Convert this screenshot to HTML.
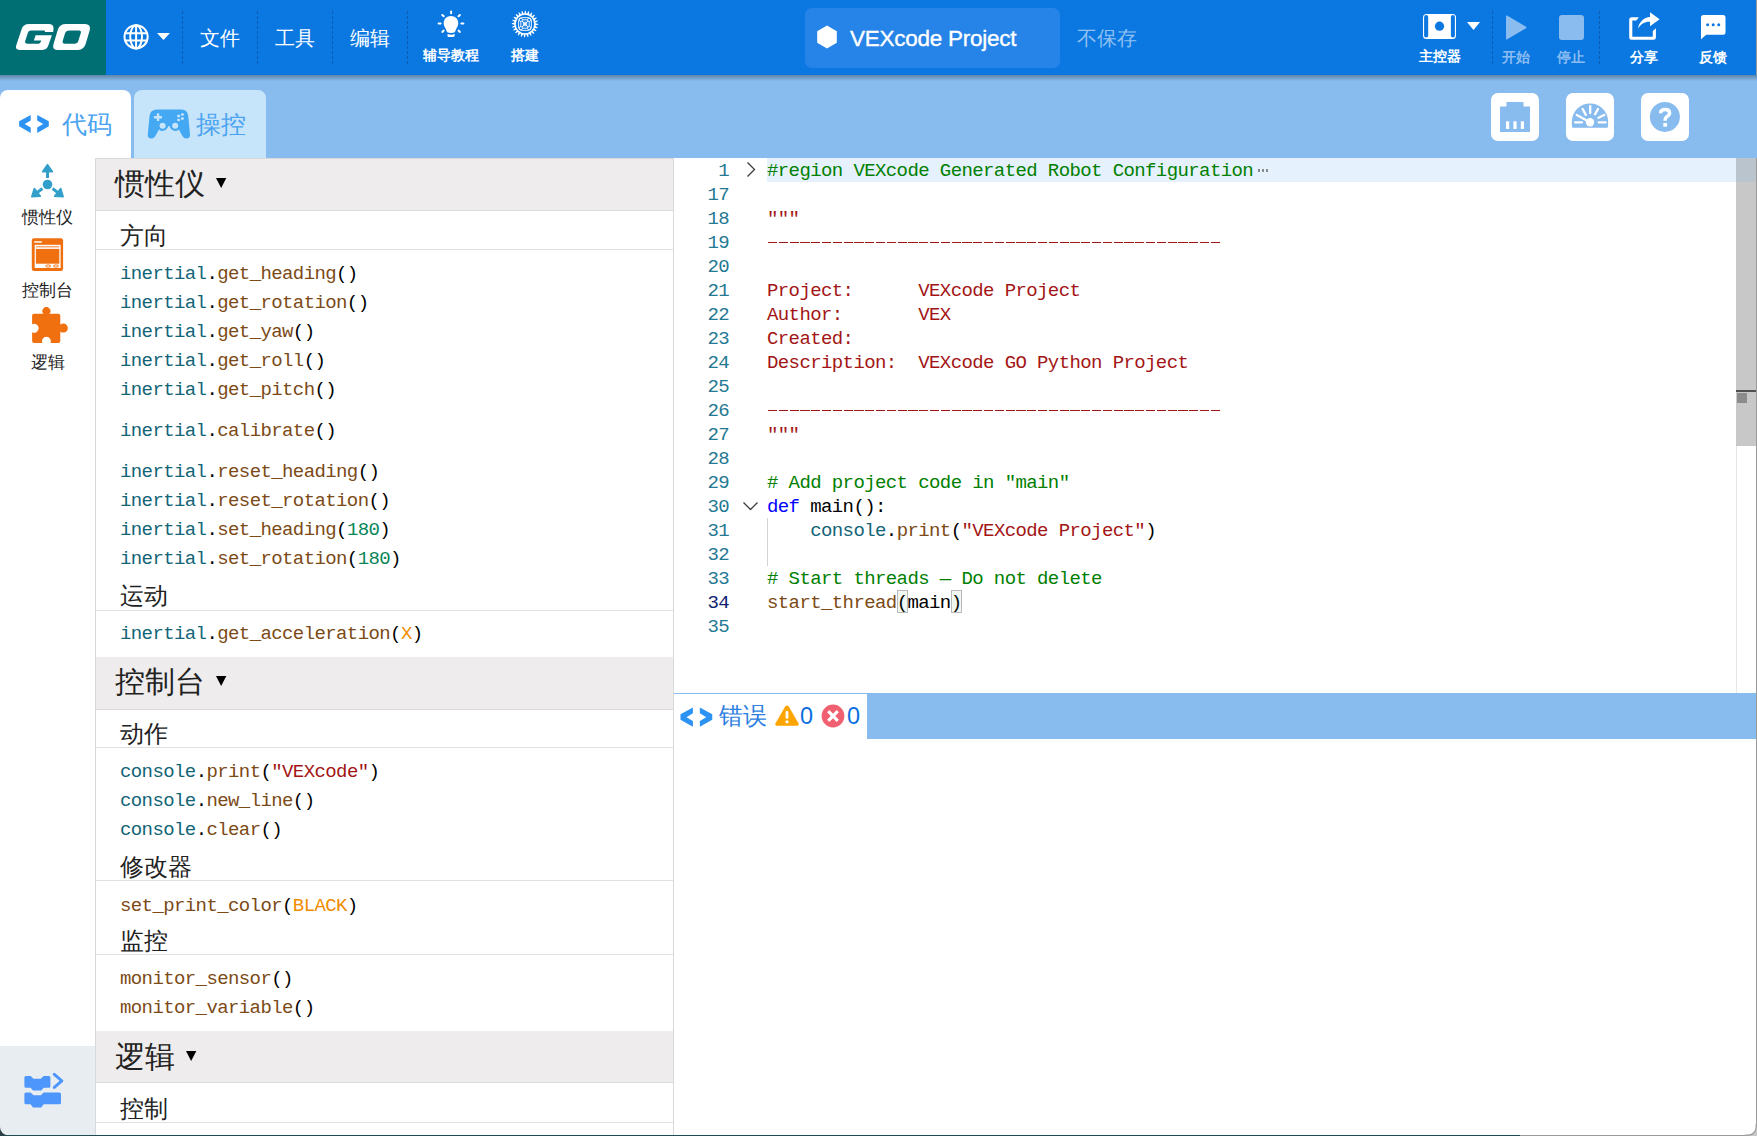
<!DOCTYPE html>
<html><head><meta charset="utf-8">
<style>
*{box-sizing:border-box;margin:0;padding:0}
html,body{width:1757px;height:1136px;overflow:hidden;background:#fff;font-family:"Liberation Sans",sans-serif}
.a{position:absolute;white-space:pre}
#top{position:absolute;left:0;top:0;width:1757px;height:75px;background:#0b78e2}
#logo{position:absolute;left:0;top:0;width:106px;height:75px;background:#006f73}
#sub{position:absolute;left:0;top:75px;width:1757px;height:83px;background:#88bbee}
#shadow{position:absolute;left:0;top:75px;width:1757px;height:6px;background:linear-gradient(#5f86a8,rgba(136,187,238,0))}
.sep{position:absolute;top:11px;height:53px;width:0;border-left:1px dashed #0b5bb0}
.menu{position:absolute;top:25px;color:#fff;font-size:20px;line-height:26px}
.blab{position:absolute;color:#fff;font-size:13.5px;font-weight:bold;line-height:16px;text-align:center}
.tab{position:absolute;top:90px;height:68px;border-radius:8px 8px 0 0}
.box{position:absolute;top:93px;width:48px;height:48px;background:#fff;border-radius:7px}
#side{position:absolute;left:0;top:158px;width:95px;height:978px;background:#fff}
#panel{position:absolute;left:95px;top:158px;width:579px;height:978px;background:#fff;border-left:1px solid #d9d9d9;border-right:1px solid #d9d9d9;overflow:hidden}
.hdr{position:absolute;left:0;width:577px;height:52px;background:#eeecec;border-top:1px solid #dcdcdc;border-bottom:1px solid #dcdcdc}
.hl{position:absolute;left:0;width:577px;height:1px;background:#e0e0e0}
.htxt{position:absolute;font-size:30px;margin-left:1.5px;color:#222;line-height:34px}
.stxt{position:absolute;font-size:24px;color:#222;line-height:28px;margin-left:1px;margin-top:1.5px}
.code{position:absolute;font-family:"Liberation Mono",monospace;font-size:19px;letter-spacing:-0.6px;line-height:22px;white-space:pre;color:#000}
.tc{color:#126477}.fn{color:#7c4a16}.nm{color:#098658}.or{color:#f08c00}.st{color:#a31515}.cm{color:#008000}.kw{color:#0000ff}
#editor{position:absolute;left:674px;top:158px;width:1082px;height:535px;background:#fff;overflow:hidden}
.ln{position:absolute;left:0;margin-top:1px;width:55px;text-align:right;font-family:"Liberation Mono",monospace;font-size:19px;letter-spacing:-0.6px;line-height:24px;color:#237893}
.el{position:absolute;left:93px;margin-top:1px;font-family:"Liberation Mono",monospace;font-size:19px;letter-spacing:-0.6px;line-height:24px;white-space:pre;color:#000}
</style></head><body>
<!-- top bar -->
<div id="top"></div>
<div id="logo"><svg width="106" height="75" viewBox="0 0 106 75"><path fill="#fff" d="M29,24 L48.5,24 Q54,24 53.5,29 L53.2,32.1 L45.1,32.1 L44.5,30.5 L31,30.5 Q28.5,30.5 28,32.5 L25.2,41 Q24.5,43.8 27.5,43.8 L37.4,43.8 Q40.5,43.8 41.2,40.4 L33.9,40.4 L35.6,35.3 L51.9,35.3 L48.5,45 Q47,49.9 42.4,49.9 L19.5,49.9 Q15,49.9 16.2,45.5 L21.5,29.5 Q23,24 29,24 Z"/><path fill="#fff" fill-rule="evenodd" d="M66,24 H85 Q91,24 89.8,30 L85.8,43.5 Q84,50 78,50 H58 Q52,50 53.4,44.5 L57.8,29.8 Q59.5,24 66,24 Z M69.5,30.5 H79 Q81.5,30.5 80.8,33 L78.3,41 Q77.5,43.8 74.5,43.8 H65 Q62,43.8 62.7,41 L65,33.5 Q65.8,30.5 69.5,30.5 Z"/></svg></div>

<!-- globe -->
<svg class="a" style="left:122px;top:23px" width="28" height="28" viewBox="0 0 28 28"><g fill="none" stroke="#fff" stroke-width="2"><circle cx="14.1" cy="13.8" r="11.6"/><ellipse cx="14.1" cy="13.8" rx="5.9" ry="11.6"/><line x1="14.1" y1="2" x2="14.1" y2="25.6"/><path d="M2.6,10.2 H25.6 M2.6,17.5 H25.6"/></g></svg>
<svg class="a" style="left:157px;top:33px" width="13" height="7" viewBox="0 0 13 7"><path d="M0,0 H13 L6.5,7 Z" fill="#fff"/></svg>
<div class="sep" style="left:182px"></div>
<div class="menu" style="left:200px">文件</div>
<div class="sep" style="left:257px"></div>
<div class="menu" style="left:275px">工具</div>
<div class="sep" style="left:332px"></div>
<div class="menu" style="left:350px">编辑</div>
<div class="sep" style="left:407px"></div>
<!-- bulb -->
<svg class="a" style="left:436px;top:9px" width="30" height="30" viewBox="0 0 30 30"><g fill="#fff"><path d="M15,7.1 C19.2,7.1 22.3,10.2 22.3,14.3 C22.3,17.5 20.2,19.3 19.6,21.5 Q19.3,24 15,24 Q10.7,24 10.4,21.5 C9.8,19.3 7.7,17.5 7.7,14.3 C7.7,10.2 10.8,7.1 15,7.1 Z"/><path d="M11.6,24.9 Q15,26.4 18.9,24.9 L18.5,27 Q18.2,27.9 17.3,27.9 H12.7 Q11.8,27.9 11.5,27 Z"/></g><g stroke="#fff" stroke-width="2" stroke-linecap="round"><line x1="15.1" y1="2.6" x2="15.1" y2="4.3"/><line x1="6.3" y1="6" x2="7.7" y2="7.3"/><line x1="23.9" y1="6" x2="22.5" y2="7.3"/><line x1="2.6" y1="14.5" x2="4.6" y2="14.5"/><line x1="25.4" y1="14.5" x2="27.4" y2="14.5"/><line x1="6.3" y1="22.9" x2="7.7" y2="21.6"/><line x1="23.9" y1="22.9" x2="22.5" y2="21.6"/></g></svg>
<div class="blab" style="left:420px;top:47.5px;width:62px">辅导教程</div>
<!-- gear -->
<svg class="a" style="left:511px;top:10px" width="28" height="28" viewBox="0 0 28 28"><path d="M13.36,3.42 L14.00,0.80 L14.79,0.82 L15.38,3.49 L16.12,3.62 L17.42,1.25 L18.17,1.48 L18.06,4.21 L18.74,4.52 L20.60,2.57 L21.27,2.98 L20.45,5.59 L21.03,6.07 L23.33,4.67 L23.88,5.24 L22.41,7.55 L22.85,8.16 L25.43,7.40 L25.81,8.10 L23.79,9.94 L24.06,10.65 L26.75,10.58 L26.93,11.35 L24.51,12.62 L24.58,13.36 L27.20,14.00 L27.18,14.79 L24.51,15.38 L24.38,16.12 L26.75,17.42 L26.52,18.17 L23.79,18.06 L23.48,18.74 L25.43,20.60 L25.02,21.27 L22.41,20.45 L21.93,21.03 L23.33,23.33 L22.76,23.88 L20.45,22.41 L19.84,22.85 L20.60,25.43 L19.90,25.81 L18.06,23.79 L17.35,24.06 L17.42,26.75 L16.65,26.93 L15.38,24.51 L14.64,24.58 L14.00,27.20 L13.21,27.18 L12.62,24.51 L11.88,24.38 L10.58,26.75 L9.83,26.52 L9.94,23.79 L9.26,23.48 L7.40,25.43 L6.73,25.02 L7.55,22.41 L6.97,21.93 L4.67,23.33 L4.12,22.76 L5.59,20.45 L5.15,19.84 L2.57,20.60 L2.19,19.90 L4.21,18.06 L3.94,17.35 L1.25,17.42 L1.07,16.65 L3.49,15.38 L3.42,14.64 L0.80,14.00 L0.82,13.21 L3.49,12.62 L3.62,11.88 L1.25,10.58 L1.48,9.83 L4.21,9.94 L4.52,9.26 L2.57,7.40 L2.98,6.73 L5.59,7.55 L6.07,6.97 L4.67,4.67 L5.24,4.12 L7.55,5.59 L8.16,5.15 L7.40,2.57 L8.10,2.19 L9.94,4.21 L10.65,3.94 L10.58,1.25 L11.35,1.07 L12.62,3.49 Z" fill="#fff"/><circle cx="14" cy="14" r="9.2" fill="#0b78e2"/><g fill="none" stroke="#fff" stroke-width="0.9"><rect x="7.6" y="7.6" width="12.8" height="12.8" rx="3.5"/><circle cx="9.8" cy="9.8" r="1.7"/><circle cx="18.2" cy="9.8" r="1.7"/><circle cx="9.8" cy="18.2" r="1.7"/><circle cx="18.2" cy="18.2" r="1.7"/><path d="M11.5,9.8 H16.5 M11.5,18.2 H16.5 M9.8,11.5 V16.5 M18.2,11.5 V16.5"/><rect x="12.3" y="12.3" width="3.4" height="3.4"/><path d="M11,11 L17,17 M17,11 L11,17"/></g></svg>
<div class="blab" style="left:505px;top:47.5px;width:40px">搭建</div>
<!-- project pill -->
<div class="a" style="left:805px;top:8px;width:255px;height:60px;background:#2683e8;border-radius:7px"></div>
<svg class="a" style="left:816.4px;top:25.4px" width="22" height="24" viewBox="0 0 22 24"><path d="M11,0.5 L20.8,6.2 V17.8 L11,23.5 L1.2,17.8 V6.2 Z" fill="#fff"/></svg>
<div class="a" style="left:850px;top:24.8px;color:#fff;font-size:22.5px;letter-spacing:-0.25px;-webkit-text-stroke:0.35px #fff;line-height:28px">VEXcode Project</div>
<div class="a" style="left:1077px;top:25px;color:#8fc0f1;font-size:20px;line-height:26px">不保存</div>
<!-- brain -->
<svg class="a" style="left:1422px;top:13px" width="35" height="27" viewBox="0 0 35 27"><rect x="1" y="1" width="33" height="25" rx="3.5" fill="#fff"/><rect x="2.1" y="2.0" width="4.1" height="22.4" rx="2" fill="#0b78e2"/><rect x="28.9" y="2.0" width="4.0" height="22.4" rx="2" fill="#0b78e2"/><circle cx="17.5" cy="13.2" r="4.6" fill="#0b78e2"/></svg>
<svg class="a" style="left:1467px;top:22px" width="13" height="8" viewBox="0 0 13 8"><path d="M0,0 H13 L6.5,8 Z" fill="#fff"/></svg>
<div class="blab" style="left:1410px;top:49px;width:60px">主控器</div>
<div class="sep" style="left:1492px"></div>
<svg class="a" style="left:1505px;top:14px" width="23" height="27" viewBox="0 0 23 27"><path d="M2,1.5 Q1,1 1,2.5 V24.5 Q1,26 2.2,25.3 L21,14.3 Q22,13.5 21,12.7 Z" fill="#8bbcf0"/></svg>
<div class="blab" style="left:1496px;top:50px;width:40px;color:#8bbcf0">开始</div>
<div class="a" style="left:1559px;top:15px;width:25px;height:25px;background:#8bbcf0;border-radius:3px"></div>
<div class="blab" style="left:1551px;top:50px;width:40px;color:#8bbcf0">停止</div>
<div class="sep" style="left:1599px"></div>
<!-- share -->
<svg class="a" style="left:1627px;top:10px" width="36" height="32" viewBox="0 0 36 32"><path d="M2.2,9.8 Q2.2,7.3 4.7,7.3 H11.8 L9.3,10.4 H5.3 V26.7 H25.8 V21 L28.9,18.2 V27.3 Q28.9,29.8 26.4,29.8 H4.7 Q2.2,29.8 2.2,27.3 Z" fill="#fff"/><path d="M11,18.8 C12,12 17,7.2 23,7 V2.2 L32.6,9.3 L23,16.2 V11.7 C18,11.5 13.5,14 11,18.8 Z" fill="#fff"/></svg>
<div class="blab" style="left:1624px;top:50px;width:40px">分享</div>
<!-- chat -->
<svg class="a" style="left:1700px;top:14px" width="27" height="26" viewBox="0 0 27 26"><path d="M3.5,0.9 H23 Q25.5,0.9 25.5,3.4 V18.2 Q25.5,20.7 23,20.7 H6.2 L1,25.2 V3.4 Q1,0.9 3.5,0.9 Z" fill="#fff"/><g fill="#0b78e2"><circle cx="7.6" cy="10.7" r="1.5"/><circle cx="13.2" cy="10.7" r="1.5"/><circle cx="18.7" cy="10.7" r="1.5"/></g></svg>
<div class="blab" style="left:1693px;top:50px;width:40px">反馈</div>
<div class="a" style="left:1756px;top:0;width:1px;height:1136px;background:#9a9a9a"></div>
<div id="sub"></div>
<div id="shadow"></div>
<div class="tab" style="left:0;width:131px;background:#fff"></div>
<div class="tab" style="left:134px;width:132px;background:#c6e4fa"></div>
<svg class="a" style="left:18px;top:113px" width="32" height="21" viewBox="0 0 32 21"><path fill="#2d93f3" d="M12.7,2 L1.1,8.3 V13.3 L12.7,19.9 V14.6 L6.7,11.1 L12.7,7.4 Z M19.2,2 L30.8,8.3 V13.3 L19.2,19.9 V14.6 L25.2,11.1 L19.2,7.4 Z"/></svg>
<div class="a" style="left:62px;top:108px;color:#4aa3f0;font-size:25px;line-height:32px">代码</div>
<svg class="a" style="left:147px;top:108px" width="44" height="32" viewBox="0 0 44 32"><path fill="#44a8f2" d="M10,1.5 H34.5 Q40.3,1.5 41.2,7.8 L43,26.5 Q43.3,30.6 39.2,30.6 Q37,30.6 35.6,28.3 L31.8,21.4 A5.2,5.2 0 0 1 23.6,20.2 L21.9,17.6 L20.2,20.2 A5.2,5.2 0 0 1 12,21.4 L8.2,28.3 Q6.8,30.6 4.6,30.6 Q0.5,30.6 0.8,26.5 L2.6,7.8 Q3.5,1.5 10,1.5 Z"/><g fill="#c6e4fa"><circle cx="15.6" cy="17.7" r="3"/><circle cx="28.2" cy="17.7" r="3"/><rect x="6.9" y="8" width="8.1" height="2.6" rx="0.6"/><rect x="9.8" y="5.3" width="2.5" height="7.7" rx="0.6"/><ellipse cx="31.6" cy="8.1" rx="1.6" ry="1.3"/><ellipse cx="35.4" cy="6.5" rx="1.6" ry="1.3"/><ellipse cx="31.6" cy="12" rx="1.6" ry="1.3"/><ellipse cx="35.4" cy="10.6" rx="1.6" ry="1.3"/></g></svg>
<div class="a" style="left:196px;top:108px;color:#4aa3f0;font-size:25px;line-height:32px">操控</div>
<div class="box" style="left:1491px"></div>
<div class="box" style="left:1566px"></div>
<div class="box" style="left:1641px"></div>
<svg class="a" style="left:1491px;top:93px" width="48" height="48" viewBox="0 0 48 48"><path fill="#88bbee" d="M15.5,9 H32.5 V13.5 H39 V39 H9 V13.5 H15.5 Z"/><g fill="#fff"><rect x="15" y="28.3" width="3.2" height="7.7"/><rect x="22.4" y="28.3" width="3.2" height="7.7"/><rect x="29.8" y="28.3" width="3.2" height="7.7"/></g></svg>
<svg class="a" style="left:1566px;top:93px" width="48" height="48" viewBox="0 0 48 48"><path fill="#88bbee" d="M6.3,34.7 Q5.6,31 5.9,28.5 A18.1,18.1 0 0 1 42.1,28.5 Q42.4,31 41.7,34.7 Z"/><g stroke="#fff" stroke-width="2.3" stroke-linecap="round"><line x1="24.2" y1="13.2" x2="24.2" y2="20"/><line x1="16.6" y1="15.9" x2="19.8" y2="21.9"/><line x1="32" y1="15.9" x2="29.1" y2="21.3"/><line x1="38.2" y1="21.9" x2="32.5" y2="24.8"/><line x1="10.8" y1="21.9" x2="24" y2="29.3"/><line x1="9" y1="29.3" x2="16" y2="29.3"/><line x1="32.7" y1="29.3" x2="39.7" y2="29.3"/></g><circle cx="24" cy="29.3" r="4.2" fill="#fff"/></svg>
<svg class="a" style="left:1641px;top:93px" width="48" height="48" viewBox="0 0 48 48"><circle cx="23.9" cy="23.9" r="15" fill="#88bbee"/><path d="M19.6,20.2 Q19.6,16.4 24.2,16.4 Q28.6,16.4 28.6,19.8 Q28.6,22 26.1,23.5 Q24.1,24.7 24.1,26.8 V27.8" fill="none" stroke="#fff" stroke-width="3.5"/><rect x="22.3" y="30" width="3.8" height="3.7" fill="#fff"/></svg>


<!-- editor -->
<div class="a" style="left:674px;top:158px;width:1082px;height:535px;background:#fff"></div>
<div class="a" style="left:767px;top:158px;width:969px;height:24px;background:#e5f1fd"></div>
<div class="ln" style="left:674px;top:158px;width:55px;color:#237893">1</div>
<div class="el" style="left:767px;top:158px"><span class="cm">#region VEXcode Generated Robot Configuration</span></div>
<div class="ln" style="left:674px;top:182px;width:55px;color:#237893">17</div>
<div class="ln" style="left:674px;top:206px;width:55px;color:#237893">18</div>
<div class="el" style="left:767px;top:206px"><span class="st">"""</span></div>
<div class="ln" style="left:674px;top:230px;width:55px;color:#237893">19</div>
<div class="el" style="left:767px;top:230px"></div>
<div class="ln" style="left:674px;top:254px;width:55px;color:#237893">20</div>
<div class="ln" style="left:674px;top:278px;width:55px;color:#237893">21</div>
<div class="el" style="left:767px;top:278px"><span class="st">Project:      VEXcode Project</span></div>
<div class="ln" style="left:674px;top:302px;width:55px;color:#237893">22</div>
<div class="el" style="left:767px;top:302px"><span class="st">Author:       VEX</span></div>
<div class="ln" style="left:674px;top:326px;width:55px;color:#237893">23</div>
<div class="el" style="left:767px;top:326px"><span class="st">Created:</span></div>
<div class="ln" style="left:674px;top:350px;width:55px;color:#237893">24</div>
<div class="el" style="left:767px;top:350px"><span class="st">Description:  VEXcode GO Python Project</span></div>
<div class="ln" style="left:674px;top:374px;width:55px;color:#237893">25</div>
<div class="ln" style="left:674px;top:398px;width:55px;color:#237893">26</div>
<div class="el" style="left:767px;top:398px"></div>
<div class="ln" style="left:674px;top:422px;width:55px;color:#237893">27</div>
<div class="el" style="left:767px;top:422px"><span class="st">"""</span></div>
<div class="ln" style="left:674px;top:446px;width:55px;color:#237893">28</div>
<div class="ln" style="left:674px;top:470px;width:55px;color:#237893">29</div>
<div class="el" style="left:767px;top:470px"><span class="cm"># Add project code in "main"</span></div>
<div class="ln" style="left:674px;top:494px;width:55px;color:#237893">30</div>
<div class="el" style="left:767px;top:494px"><span class="kw">def</span> main():</div>
<div class="ln" style="left:674px;top:518px;width:55px;color:#237893">31</div>
<div class="el" style="left:767px;top:518px">    <span class="tc">console</span>.<span class="fn">print</span>(<span class="st">"VEXcode Project"</span>)</div>
<div class="ln" style="left:674px;top:542px;width:55px;color:#237893">32</div>
<div class="ln" style="left:674px;top:566px;width:55px;color:#237893">33</div>
<div class="el" style="left:767px;top:566px"><span class="cm"># Start threads — Do not delete</span></div>
<div class="ln" style="left:674px;top:590px;width:55px;color:#0b216f">34</div>
<div class="el" style="left:767px;top:590px"><span class="fn">start_thread</span>(main)</div>
<div class="ln" style="left:674px;top:614px;width:55px;color:#237893">35</div>
<div class="a" style="left:767.5px;top:242px;width:453.6px;height:1.3px;background:repeating-linear-gradient(90deg,#a31515 0 9.2px,transparent 9.2px 10.8px)"></div>
<div class="a" style="left:767.5px;top:410px;width:453.6px;height:1.3px;background:repeating-linear-gradient(90deg,#a31515 0 9.2px,transparent 9.2px 10.8px)"></div>
<div class="a" style="left:1258px;top:169px;width:11px;height:3px;background:repeating-linear-gradient(90deg,#8a8a8a 0 2.4px,transparent 2.4px 4px)"></div>
<svg class="a" style="left:745px;top:161px" width="12" height="17" viewBox="0 0 12 17"><path d="M2.5,1.5 L9.5,8.5 L2.5,15.5" fill="none" stroke="#3c3c3c" stroke-width="1.3"/></svg>
<svg class="a" style="left:742px;top:500px" width="17" height="12" viewBox="0 0 17 12"><path d="M1.5,2.5 L8.5,9.5 L15.5,2.5" fill="none" stroke="#3c3c3c" stroke-width="1.3"/></svg>
<div class="a" style="left:767px;top:518px;width:1px;height:48px;background:#d3d3d3"></div>
<div class="a" style="left:897px;top:590px;width:11px;height:23px;border:1px solid #b9b9b9;background:rgba(0,100,0,0.06)"></div>
<div class="a" style="left:951px;top:590px;width:11px;height:23px;border:1px solid #b9b9b9;background:rgba(0,100,0,0.06)"></div>
<div class="a" style="left:1736px;top:158px;width:1px;height:535px;background:#e6e6e6"></div>
<div class="a" style="left:1736px;top:158px;width:20px;height:288px;background:#c8c8c8"></div>
<div class="a" style="left:1736px;top:158px;width:20px;height:24px;background:#bac4cd"></div>
<div class="a" style="left:1736px;top:390px;width:20px;height:2px;background:#505050"></div>
<div class="a" style="left:1737px;top:393px;width:10px;height:10px;background:#8c8c8c"></div>
<div class="a" style="left:674px;top:693px;width:1082px;height:46px;background:#88bbee"></div>
<div class="a" style="left:674px;top:694px;width:193px;height:45px;background:#fff"></div>
<svg class="a" style="left:679px;top:706px" width="34" height="21" viewBox="0 0 34 21"><g transform="translate(0.3,-0.6) scale(1.07,1.07)"><path fill="#2d93f3" d="M12.7,2 L1.1,8.3 V13.3 L12.7,19.9 V14.6 L6.7,11.1 L12.7,7.4 Z M19.2,2 L30.8,8.3 V13.3 L19.2,19.9 V14.6 L25.2,11.1 L19.2,7.4 Z"/></g></svg>
<div class="a" style="left:719px;top:701px;color:#2d7fe0;font-size:24px;line-height:30px">错误</div>
<svg class="a" style="left:774px;top:704px" width="26" height="23" viewBox="0 0 26 23"><path d="M13,1.5 Q14,1.5 14.8,2.6 L24.6,19.6 Q25.4,21.6 23.4,21.8 H2.6 Q0.6,21.6 1.4,19.6 L11.2,2.6 Q12,1.5 13,1.5 Z" fill="#ffa500"/><rect x="11.6" y="7" width="2.8" height="7.8" rx="1" fill="#fff"/><circle cx="13" cy="17.8" r="1.6" fill="#fff"/></svg>
<div class="a" style="left:800px;top:702px;color:#0b6fdf;font-size:23.5px;line-height:28px">0</div>
<svg class="a" style="left:821px;top:704px" width="24" height="24" viewBox="0 0 24 24"><circle cx="12" cy="12" r="11.4" fill="#f06070"/><path d="M7.2,7.2 L16.8,16.8 M16.8,7.2 L7.2,16.8" stroke="#fff" stroke-width="3.2"/></svg>
<div class="a" style="left:847px;top:702px;color:#0b6fdf;font-size:23.5px;line-height:28px">0</div>
<div class="a" style="left:674px;top:739px;width:1082px;height:396px;background:#fff"></div>
<!-- panel -->
<div class="a" style="left:95px;top:158px;width:1px;height:978px;background:#d9d9d9"></div>
<div class="a" style="left:673px;top:158px;width:1px;height:978px;background:#d9d9d9"></div>
<div class="a" style="left:96px;top:158px;width:577px;height:1px;background:#d9d9d9"></div>
<div class="a" style="left:96px;top:159px;width:577px;height:51px;background:#eeecec"></div>
<div class="a" style="left:96px;top:210px;width:577px;height:1px;background:#dcdcdc"></div>
<div class="htxt" style="left:113px;top:167px">惯性仪</div>
<svg class="a" style="left:215.8px;top:178px" width="11" height="11" viewBox="0 0 11 11"><path d="M0,0 H10.3 L5.15,9.9 Z" fill="#000"/></svg>
<div class="a" style="left:96px;top:249px;width:577px;height:1px;background:#e0e0e0"></div>
<div class="stxt" style="left:119px;top:220px">方向</div>
<div class="code" style="left:120px;top:263px"><span class="tc">inertial</span>.<span class="fn">get_heading</span>()</div>
<div class="code" style="left:120px;top:292px"><span class="tc">inertial</span>.<span class="fn">get_rotation</span>()</div>
<div class="code" style="left:120px;top:321px"><span class="tc">inertial</span>.<span class="fn">get_yaw</span>()</div>
<div class="code" style="left:120px;top:350px"><span class="tc">inertial</span>.<span class="fn">get_roll</span>()</div>
<div class="code" style="left:120px;top:379px"><span class="tc">inertial</span>.<span class="fn">get_pitch</span>()</div>
<div class="code" style="left:120px;top:420px"><span class="tc">inertial</span>.<span class="fn">calibrate</span>()</div>
<div class="code" style="left:120px;top:461px"><span class="tc">inertial</span>.<span class="fn">reset_heading</span>()</div>
<div class="code" style="left:120px;top:490px"><span class="tc">inertial</span>.<span class="fn">reset_rotation</span>()</div>
<div class="code" style="left:120px;top:519px"><span class="tc">inertial</span>.<span class="fn">set_heading</span>(<span class="nm">180</span>)</div>
<div class="code" style="left:120px;top:548px"><span class="tc">inertial</span>.<span class="fn">set_rotation</span>(<span class="nm">180</span>)</div>
<div class="a" style="left:96px;top:610px;width:577px;height:1px;background:#e0e0e0"></div>
<div class="stxt" style="left:119px;top:580px">运动</div>
<div class="code" style="left:120px;top:623px"><span class="tc">inertial</span>.<span class="fn">get_acceleration</span>(<span class="or">X</span>)</div>
<div class="a" style="left:96px;top:657px;width:577px;height:52px;background:#eeecec"></div>
<div class="a" style="left:96px;top:709px;width:577px;height:1px;background:#dcdcdc"></div>
<div class="htxt" style="left:113px;top:665px">控制台</div>
<svg class="a" style="left:215.8px;top:676px" width="11" height="11" viewBox="0 0 11 11"><path d="M0,0 H10.3 L5.15,9.9 Z" fill="#000"/></svg>
<div class="a" style="left:96px;top:747px;width:577px;height:1px;background:#e0e0e0"></div>
<div class="stxt" style="left:119px;top:718px">动作</div>
<div class="code" style="left:120px;top:761px"><span class="tc">console</span>.<span class="fn">print</span>(<span class="st">"VEXcode"</span>)</div>
<div class="code" style="left:120px;top:790px"><span class="tc">console</span>.<span class="fn">new_line</span>()</div>
<div class="code" style="left:120px;top:819px"><span class="tc">console</span>.<span class="fn">clear</span>()</div>
<div class="a" style="left:96px;top:880px;width:577px;height:1px;background:#e0e0e0"></div>
<div class="stxt" style="left:119px;top:851px">修改器</div>
<div class="code" style="left:120px;top:895px"><span class="fn">set_print_color</span>(<span class="or">BLACK</span>)</div>
<div class="a" style="left:96px;top:954px;width:577px;height:1px;background:#e0e0e0"></div>
<div class="stxt" style="left:119px;top:925px">监控</div>
<div class="code" style="left:120px;top:968px"><span class="fn">monitor_sensor</span>()</div>
<div class="code" style="left:120px;top:997px"><span class="fn">monitor_variable</span>()</div>
<div class="a" style="left:96px;top:1031px;width:577px;height:51px;background:#eeecec"></div>
<div class="a" style="left:96px;top:1082px;width:577px;height:1px;background:#dcdcdc"></div>
<div class="htxt" style="left:113px;top:1040px">逻辑</div>
<svg class="a" style="left:185.8px;top:1051px" width="11" height="11" viewBox="0 0 11 11"><path d="M0,0 H10.3 L5.15,9.9 Z" fill="#000"/></svg>
<div class="a" style="left:96px;top:1122px;width:577px;height:1px;background:#e0e0e0"></div>
<div class="stxt" style="left:119px;top:1093px">控制</div>
<!-- sidebar -->
<svg class="a" style="left:26px;top:158px" width="44" height="44" viewBox="0 0 44 44"><g fill="#33a0cb"><circle cx="21.5" cy="26.5" r="4.8"/><g id="arr"><path d="M21.5,6.6 L16.6,13.6 H26.4 Z" stroke="#33a0cb" stroke-width="1.6" stroke-linejoin="round"/><rect x="20" y="13" width="3" height="7"/></g><use href="#arr" transform="rotate(128 21.5 26.5)"/><use href="#arr" transform="rotate(-128 21.5 26.5)"/></g></svg>
<div class="a" style="left:0;top:207px;width:95px;text-align:center;font-size:17px;line-height:22px;color:#222">惯性仪</div>
<svg class="a" style="left:31px;top:238px" width="33" height="34" viewBox="0 0 33 34"><rect x="0.8" y="0.3" width="31.3" height="32.6" rx="2.2" fill="#f07010"/><rect x="3.2" y="3.2" width="7.6" height="1.5" fill="#fff"/><rect x="3.7" y="6.8" width="25.9" height="23.2" fill="#fff"/><rect x="4.9" y="8.4" width="23.4" height="0.9" fill="#f07010"/><rect x="4.9" y="10.9" width="23.4" height="14.8" fill="#f07010"/><g fill="none" stroke="#f07010" stroke-width="0.9"><ellipse cx="17.2" cy="28" rx="2.6" ry="1.1"/><ellipse cx="25" cy="28" rx="2.6" ry="1.1"/></g></svg>
<div class="a" style="left:0;top:280px;width:95px;text-align:center;font-size:17px;line-height:22px;color:#222">控制台</div>
<svg class="a" style="left:31px;top:307px" width="38" height="38" viewBox="0 0 38 38"><path fill="#f07010" d="M3,6.8 H12.5 A4,4 0 1 1 18.3,6.8 H27.3 Q29.3,6.8 29.3,8.8 V17.8 A4.5,4.5 0 1 1 29.3,24.4 V34 Q29.3,36 27.3,36 H19.4 A4.4,4.4 0 1 0 11.4,36 H3.1 Q1.1,36 1.1,34 V25.3 A4.5,4.5 0 1 0 1.1,17.3 V8.8 Q1.1,6.8 3,6.8 Z"/></svg>
<div class="a" style="left:0;top:352px;width:95px;text-align:center;font-size:17px;line-height:22px;color:#222">逻辑</div>
<div class="a" style="left:0;top:1046px;width:95px;height:90px;background:#e8edf2"></div>
<svg class="a" style="left:22px;top:1070px" width="44" height="40" viewBox="0 0 44 40"><g fill="#4d96fb"><path d="M3.9,5.9 H8.6 L11.5,8.8 H18.8 L21.7,5.9 H26.9 Q28.4,5.9 28.4,7.4 V16.3 Q28.4,17.8 26.9,17.8 H21.7 L19.3,20.6 H11 L8.6,17.8 H3.9 Q2.4,17.8 2.4,16.3 V7.4 Q2.4,5.9 3.9,5.9 Z"/><path d="M3.9,22.5 H8.6 L11.5,25.3 H18.8 L21.7,22.5 H37.5 Q39,22.5 39,24 V32.7 Q39,34.2 37.5,34.2 H21.7 L19.3,37.4 H11 L8.6,34.2 H3.9 Q2.4,34.2 2.4,32.7 V24 Q2.4,22.5 3.9,22.5 Z"/></g><path d="M32.3,4.3 L39.8,10.9 L32.3,17.4" fill="none" stroke="#4d96fb" stroke-width="3" stroke-linecap="round" stroke-linejoin="round"/></svg>
<div class="a" style="left:0;top:1135px;width:1520px;height:1px;background:#1f4d55"></div>
<div class="a" style="left:1520px;top:1135px;width:237px;height:1px;background:#9a9a9a"></div>
<svg class="a" style="left:1745px;top:1124px" width="12" height="12" viewBox="0 0 12 12"><path d="M12,0 V12 H0 V11.2 H3 A8.2,8.2 0 0 0 11.2,3 V0 Z" fill="#c8c8c8"/><path d="M11.2,0 V3 A8.2,8.2 0 0 1 3,11.2 H0" fill="none" stroke="#9a9a9a" stroke-width="1.2"/></svg>
<svg class="a" style="left:0;top:1127px" width="9" height="9" viewBox="0 0 9 9"><path d="M0,0 A8.5,8.5 0 0 0 8.5,8.5 H0 Z" fill="#2b3f45"/></svg>
</body></html>
